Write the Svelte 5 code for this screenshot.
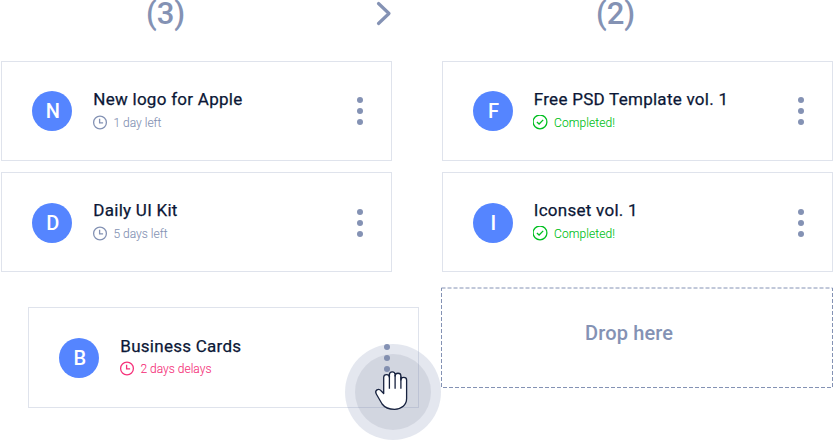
<script>
  const todo = [
    { letter: 'N', title: 'New logo for Apple', note: '1 day left', kind: 'left' },
    { letter: 'D', title: 'Daily UI Kit', note: '5 days left', kind: 'left' }
  ];
  const done = [
    { letter: 'F', title: 'Free PSD Template vol. 1', note: 'Completed!', kind: 'done' },
    { letter: 'I', title: 'Iconset vol. 1', note: 'Completed!', kind: 'done' }
  ];
  const dragged = { letter: 'B', title: 'Business Cards', note: '2 days delays', kind: 'late' };
</script>

{#snippet card(item, extra)}
  <article class="card {extra}">
    <div class="avatar"><span>{item.letter}</span></div>
    <div class="info">
      <h3>{item.title}</h3>
      <p class="note {item.kind}">
        {#if item.kind === 'done'}
          <svg class="icon" width="16" height="16" viewBox="0 0 16 16">
            <circle cx="7" cy="6.9" r="6.9" />
            <path d="M3.900 7 6.100 9 10.200 4.900" />
          </svg>
        {:else}
          <svg class="icon" width="16" height="16" viewBox="0 0 16 16">
            <circle cx="8" cy="7.5" r="6.4" />
            <path d="M7.600 3.800V7.900H11.100" />
          </svg>
        {/if}
        <span>{item.note}</span>
      </p>
    </div>
    <div class="dots"><i></i><i></i><i></i></div>
  </article>
{/snippet}

<main class="board">
  <section class="column">
    <header>
      <h2>(3)</h2>
      <svg class="next" width="18" height="28" viewBox="0 0 18 28">
        <path d="M4.500 3.500 15 13.500 4.500 23.500" />
      </svg>
    </header>
    {#each todo as item}
      {@render card(item, '')}
    {/each}
    {@render card(dragged, 'dragged')}
  </section>

  <section class="column">
    <header><h2>(2)</h2></header>
    {#each done as item}
      {@render card(item, '')}
    {/each}
    <div class="drop">
      <svg class="outline" width="393" height="102" viewBox="0 0 393 102">
        <rect x="0.5" y="1" width="391" height="99.500" />
      </svg>
      <span>Drop here</span>
    </div>
  </section>

  <svg class="cursor" width="96" height="96" viewBox="0 0 96 96">
    <circle cx="48" cy="48" r="48" fill="#8492b4" fill-opacity=".22" />
    <circle cx="48" cy="48" r="38" fill="#7d8499" fill-opacity=".17" />
    <path
      class="hand"
      d="M38.700 49.500V33.300c0-3.700 5.700-3.700 5.700 0V30.800c0-3.900 5.700-3.900 5.700 0V32c0-3.700 5.800-3.700 5.800 0V36c0-3.500 5.700-3.500 5.700 0V54.500c0 6.500-5 10.800-12 10.800-5.500 0-9.300-1-12.500-5.300L31.300 50c-2-3.600 2.200-6.300 4.700-3.300Z"
    />
    <path class="finger" d="M44.400 32v12.800M50.100 31v13.800M55.900 32.500v12.300" />
  </svg>
</main>

<style>
  :global(body) {
    margin: 0;
    background: #fff;
    overflow: hidden;
  }
  .board {
    position: relative;
    box-sizing: border-box;
    display: flex;
    gap: 50px;
    width: 833px;
    height: 440px;
    padding-left: 1px;
    font-family: Roboto, sans-serif;
    color: #0b1736;
  }
  .column {
    width: 391px;
    flex: none;
  }
  header {
    display: flex;
    justify-content: flex-end;
    height: 61px;
  }
  h2 {
    flex: 1;
    margin: 0;
    padding-left: 145px;
    font-size: 31px;
    line-height: 28px;
    font-weight: 500;
    color: #8492b4;
  }
  .column + .column h2 {
    padding-left: 154px;
  }
  .next {
    fill: none;
    stroke: #8492b4;
    stroke-width: 3.2;
    stroke-linecap: round;
    stroke-linejoin: round;
  }
  .card {
    box-sizing: border-box;
    display: flex;
    width: 391px;
    height: 100px;
    margin-bottom: 11px;
    padding: 29px 28px 0 30.3px;
    border: 1px solid #dfe3ec;
    background: #fff;
  }
  .card + .card .avatar,
  .card + .card .dots {
    margin-top: 0.6px;
  }
  .column + .column .card {
    padding-left: 29.8px;
  }
  .column + .column .info {
    padding-left: 20.8px;
  }
  .dragged {
    margin: 35px 0 0 27px;
    height: 101px;
  }
  .avatar {
    flex: none;
    width: 40.2px;
    height: 40.2px;
    margin-top: 0.2px;
    border-radius: 20.1px;
    background: #5585ff;
    color: #fff;
    font-size: 20px;
    font-weight: 500;
    line-height: 41px;
    text-align: center;
    text-indent: 1px;
  }
  .info {
    flex: 1;
    padding-left: 20.8px;
  }
  h3 {
    margin: -2px 0 0;
    font-size: 17px;
    line-height: 20px;
    font-weight: 400;
    letter-spacing: 0.27px;
    -webkit-text-stroke: 0.25px currentColor;
    white-space: nowrap;
  }
  .dragged h3 {
    margin-top: -1px;
  }
  .note {
    display: flex;
    align-items: center;
    gap: 5px;
    margin: 6px 0 0 -0.8px;
    font-size: 12px;
    line-height: 16px;
    font-weight: 300;
    -webkit-text-stroke: 0.1px currentColor;
    color: #8492b4;
  }
  .dragged .note {
    margin-top: 5px;
  }
  .icon {
    fill: none;
    stroke: currentColor;
    stroke-width: 1.3;
  }
  .done {
    color: #00bf20;
    letter-spacing: 0.1px;
  }
  .late {
    color: #f5317a;
  }
  .dots {
    display: flex;
    flex-direction: column;
    gap: 5px;
    padding-top: 6px;
  }
  .dots i {
    width: 6px;
    height: 6px;
    border-radius: 50%;
    background: #8492b4;
  }
  .drop {
    position: relative;
    box-sizing: border-box;
    height: 100px;
    margin-top: 15px;
    display: flex;
    align-items: center;
    padding: 0 0 8px 143px;
    font-size: 20px;
    font-weight: 500;
    letter-spacing: 0.15px;
    color: #8492b4;
  }
  .outline {
    position: absolute;
    left: -1px;
    top: 0;
    fill: none;
    stroke: #8492b4;
    stroke-width: 1;
    stroke-dasharray: 4 2;
  }
  .cursor {
    position: absolute;
    left: 345px;
    top: 344px;
  }
  .hand {
    fill: #fff;
    stroke: #17223f;
    stroke-width: 1.3;
    stroke-linejoin: round;
  }
  .finger {
    fill: none;
    stroke: #17223f;
    stroke-width: 1.3;
  }
</style>
